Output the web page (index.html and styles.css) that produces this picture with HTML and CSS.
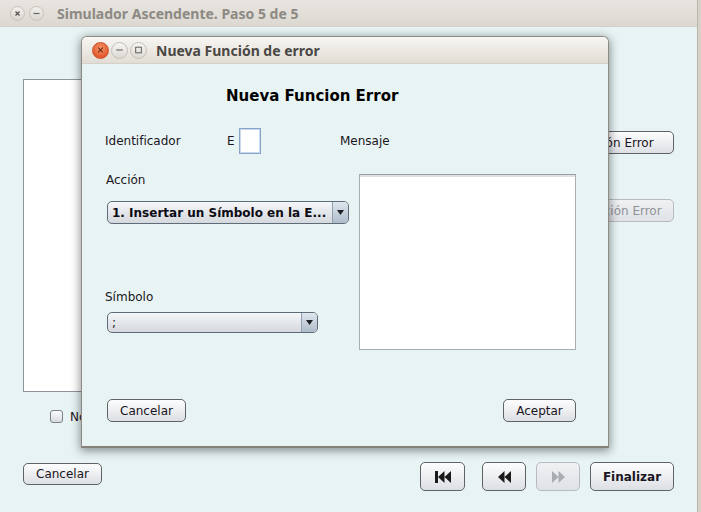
FILE: index.html
```html
<!DOCTYPE html>
<html lang="es">
<head>
<meta charset="utf-8">
<title>Simulador Ascendente</title>
<link rel="stylesheet" href="styles.css">
</head>
<body>
<div class="window">
  <div class="titlebar">
    <div class="tb-buttons">
      <span class="tb-btn"><svg width="13" height="13" viewBox="0 0 13 13"><path d="M4.5 4.5L8.5 8.5M8.5 4.5L4.5 8.5" stroke="#55524d" stroke-width="1.2" fill="none"/></svg></span>
      <span class="tb-btn"><svg width="13" height="13" viewBox="0 0 13 13"><path d="M3.5 6.5H9.5" stroke="#6b6863" stroke-width="1.2" fill="none"/></svg></span>
    </div>
    <span class="tb-title">Simulador Ascendente. Paso 5 de 5</span>
  </div>
  <div class="win-body">
    <div class="main-row">
      <div class="listbox"></div>
      <div class="side-buttons">
        <button class="btn side-btn">Añadir Función Error</button>
        <button class="btn side-btn" disabled>Modificar Función Error</button>
      </div>
    </div>
    <div class="check-row"><span class="checkbox"></span><span class="check-label">No</span></div>
    <div class="bottom-row">
      <button class="btn back-cancel">Cancelar</button>
      <div class="nav">
        <button class="btn nav-btn nav-first"><svg width="16" height="12" viewBox="0 0 16 12"><rect x="0" y="0" width="3" height="12" fill="#1a1a1a"/><path d="M9.5 0L3 6L9.5 12Z M16 0L9.5 6L16 12Z" fill="#1a1a1a"/></svg></button>
        <button class="btn nav-btn nav-prev"><svg width="13" height="12" viewBox="0 0 13 12"><path d="M6.5 0L0 6L6.5 12Z M13 0L6.5 6L13 12Z" fill="#1a1a1a"/></svg></button>
        <button class="btn nav-btn nav-next" disabled><svg width="13" height="12" viewBox="0 0 13 12"><path d="M0 0L6.5 6L0 12Z M6.5 0L13 6L6.5 12Z" fill="#a9adb2"/></svg></button>
        <button class="btn nav-btn finish">Finalizar</button>
      </div>
    </div>
  </div>

  <div class="dialog">
    <div class="dlg-titlebar">
      <div class="dlg-tb-buttons">
        <span class="dtb-btn dtb-close"><svg width="16" height="16" viewBox="0 0 16 16"><path d="M5.5 5.5L10.5 10.5M10.5 5.5L5.5 10.5" stroke="#6e2a12" stroke-width="1.2" fill="none"/></svg></span>
        <span class="dtb-btn"><svg width="16" height="16" viewBox="0 0 16 16"><path d="M4.5 8H11.5" stroke="#5a5752" stroke-width="1.1" fill="none"/></svg></span>
        <span class="dtb-btn"><svg width="16" height="16" viewBox="0 0 16 16"><rect x="5" y="5" width="6" height="6" stroke="#5a5752" stroke-width="1" fill="none"/></svg></span>
      </div>
      <span class="dlg-title">Nueva Función de error</span>
    </div>
    <div class="dlg-body">
      <h1 class="dlg-heading">Nueva Funcion Error</h1>
      <div class="id-row">
        <span class="lbl id-lbl">Identificador</span>
        <span class="lbl e-lbl">E</span>
        <span class="id-input"></span>
        <span class="lbl msg-lbl">Mensaje</span>
      </div>
      <div class="mid-row">
        <div class="left-col">
          <span class="lbl accion-lbl">Acción</span>
          <div class="combo combo-accion">
            <span class="combo-text bold">1. Insertar un Símbolo en la E...</span>
            <span class="combo-arrow"><svg width="7" height="5" viewBox="0 0 7 5"><path d="M0 0H7L3.5 5Z" fill="#1f2226"/></svg></span>
          </div>
          <span class="lbl simbolo-lbl">Símbolo</span>
          <div class="combo combo-simbolo">
            <span class="combo-text">;</span>
            <span class="combo-arrow"><svg width="7" height="5" viewBox="0 0 7 5"><path d="M0 0H7L3.5 5Z" fill="#1f2226"/></svg></span>
          </div>
        </div>
        <div class="msg-area"></div>
      </div>
      <div class="dlg-buttons">
        <button class="btn dlg-cancel">Cancelar</button>
        <button class="btn dlg-ok">Aceptar</button>
      </div>
    </div>
  </div>
</div>
</body>
</html>
```

FILE: styles.css
```css
* { box-sizing: border-box; }
html, body { margin: 0; padding: 0; }
body {
  width: 701px;
  height: 512px;
  overflow: hidden;
  background: #d6d1c9;
  font-family: "DejaVu Sans", sans-serif;
  font-size: 12px;
  color: #1b1422;
}
.window {
  position: relative;
  width: 698px;
  height: 512px;
  background: #e8f4f4;
  border-right: 1px solid #bcb5aa;
}
.titlebar {
  height: 27px;
  display: flex;
  align-items: center;
  padding-left: 10px;
  background: linear-gradient(#e8e5e0, #dcd8d1);
  border-bottom: 1px solid #d3cec6;
}
.tb-buttons { display: flex; gap: 4px; }
.tb-btn {
  width: 15px; height: 15px;
  border-radius: 50%;
  border: 1px solid #c8c3bb;
  background: linear-gradient(#f3f1ee, #d9d5cf);
  display: flex; align-items: center; justify-content: center;
}
.tb-title {
  margin-left: 13px;
  font-family: "Noto Sans", sans-serif;
  font-weight: 700;
  font-size: 14px;
  color: #8d8a84;
}
.win-body {
  padding: 52px 23px 0 23px;
  display: flex;
  flex-direction: column;
}
.main-row { display: flex; height: 313px; }
.listbox {
  width: 468px;
  height: 313px;
  background: #fff;
  border: 1px solid #8e949a;
}
.side-buttons {
  margin-left: auto;
  display: flex;
  flex-direction: column;
  padding-top: 52px;
  gap: 45px;
}
.btn {
  font: inherit;
  color: #1b1422;
  border: 1px solid #5f6368;
  border-radius: 5px;
  background: linear-gradient(#fdfdfe 0%, #eef0f2 45%, #dcdfe4 100%);
  padding: 0;
  display: flex;
  align-items: center;
  justify-content: center;
  white-space: nowrap;
}
.btn:disabled {
  border-color: #b7bbc0;
  background: linear-gradient(#eff1f3, #dfe2e6);
  color: #8f9398;
}
.side-btn { width: 163px; height: 23px; }
.check-row {
  margin-top: 18px;
  margin-left: 27px;
  height: 13px;
  display: flex;
  align-items: center;
}
.checkbox {
  width: 13px; height: 13px;
  border: 1px solid #7b8187;
  border-radius: 3px;
  background: linear-gradient(#fbfbfc, #d9dce0);
}
.check-label { margin-left: 7px; }
.bottom-row {
  margin-top: 39px;
  display: flex;
  justify-content: space-between;
  align-items: flex-start;
}
.back-cancel { width: 79px; height: 22px; margin-top: 1px; }
.nav { display: flex; }
.nav-btn { height: 29px; }
.nav-first { width: 45px; }
.nav-prev { width: 44px; margin-left: 17px; }
.nav-next { width: 44px; margin-left: 10px; }
.finish { width: 84px; margin-left: 10px; font-weight: 700; }

/* dialog window */
.dialog {
  position: absolute;
  left: 81px;
  top: 36px;
  width: 528px;
  height: 412px;
  background: #e8f4f4;
  border: 1px solid #8f8a83;
  border-bottom: 2px solid #85817a;
  border-radius: 6px 6px 0 0;
  box-shadow: 0 2px 10px 1px rgba(0, 0, 0, 0.42);
  overflow: hidden;
}
.dlg-titlebar {
  height: 27px;
  display: flex;
  align-items: center;
  padding-left: 10px;
  background: linear-gradient(#f8f6f3, #e1dcd4);
  border-bottom: 1px solid #d5d0c8;
}
.dlg-tb-buttons { display: flex; gap: 2px; }
.dtb-btn {
  width: 17px; height: 17px;
  border-radius: 50%;
  border: 1px solid #c3beb6;
  background: linear-gradient(#f7f6f4, #dcd8d2);
  display: flex; align-items: center; justify-content: center;
}
.dtb-close {
  border-color: #c9532c;
  background: radial-gradient(circle at 50% 35%, #f8946a, #e35a2f 70%);
}
.dlg-title {
  margin-left: 9px;
  font-family: "Noto Sans", sans-serif;
  font-weight: 700;
  font-size: 14px;
  color: #4a4845;
}
.dlg-body {
  padding: 0 32px 0 23px;
  display: flex;
  flex-direction: column;
}
.dlg-heading {
  margin: 23px 0 0 121px;
  font-size: 15px;
  line-height: 18px;
  font-weight: 700;
  color: #000;
}
.lbl { line-height: 16px; }
.id-row {
  margin-top: 23px;
  height: 26px;
  display: flex;
  align-items: center;
}
.id-lbl { width: 122px; }
.e-lbl { width: 12px; }
.id-input {
  width: 22px;
  height: 26px;
  background: #fff;
  border: 1px solid #86a5c8;
  box-shadow: inset 0 0 0 1px #c9d8ea;
}
.msg-lbl { margin-left: 79px; }
.mid-row {
  margin-top: 18px;
  display: flex;
  align-items: flex-start;
}
.left-col {
  display: flex;
  flex-direction: column;
  align-items: flex-start;
  width: 254px;
}
.accion-lbl { margin-left: 1px; }
.combo {
  margin-left: 2px;
  display: flex;
  border: 1px solid #5e6b79;
  border-radius: 5px;
  background: linear-gradient(#f6f7f9, #e3e6ea 50%, #d5d9de);
  overflow: hidden;
}
.combo-accion { width: 242px; height: 23px; margin-top: 13px; }
.combo-simbolo { width: 211px; height: 21px; margin-top: 7px; }
.simbolo-lbl { margin-top: 65px; }
.combo-text {
  flex: 1;
  padding-left: 4px;
  display: flex;
  align-items: center;
  white-space: nowrap;
  overflow: hidden;
}
.bold { font-weight: 700; color: #0d0b14; }
.combo-arrow {
  width: 16px;
  border-left: 1px solid #8fa0b2;
  background: linear-gradient(#dfe6ee, #aebccb);
  display: flex;
  align-items: center;
  justify-content: center;
}
.msg-area {
  margin-top: 2px;
  width: 217px;
  height: 176px;
  background: #fff;
  border: 1px solid #a8adb2;
  border-top-color: #999da1;
  box-shadow: inset 0 2px 0 #e0e0e0;
}
.dlg-buttons {
  margin-top: 49px;
  padding-left: 2px;
  display: flex;
  justify-content: space-between;
}
.dlg-cancel { width: 79px; height: 23px; }
.dlg-ok { width: 73px; height: 23px; }
```
